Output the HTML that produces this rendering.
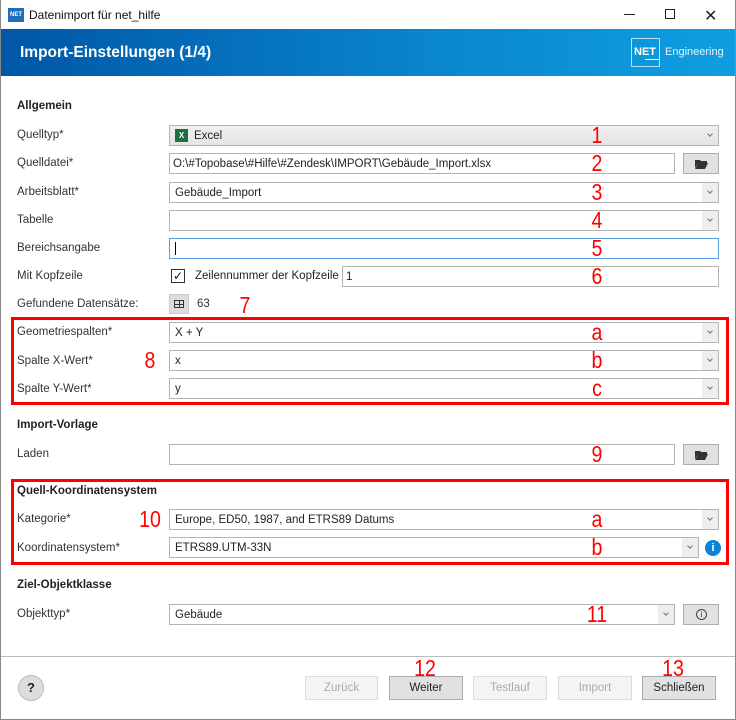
<!DOCTYPE html>
<html><head><meta charset="utf-8"><style>
*{box-sizing:border-box;margin:0;padding:0}
body{width:736px;height:720px;overflow:hidden;background:#fff;font-family:"Liberation Sans",sans-serif;font-size:12px;color:#333;position:relative}
.a{position:absolute}
.win{left:0;top:0;width:736px;height:720px;border:1px solid #888;border-top:none}
.lbl{position:absolute;left:17px;font-size:11.5px;color:#333;line-height:14px}
.h{position:absolute;left:17px;font-weight:bold;font-size:11.5px;color:#222;line-height:14px}
.f{position:absolute;height:21px;border:1px solid #b4b4b4;background:#fff;font-size:11.5px;line-height:20px;padding-left:5px;color:#222}
.cb::after{content:"";position:absolute;right:0;top:0;width:16px;height:19px;background:#eeeeee}
.cb::before{content:"";position:absolute;right:6px;top:6px;width:3px;height:3px;border-right:1px solid #777;border-bottom:1px solid #777;transform:rotate(45deg);z-index:2}
.nb::after{display:none}
.btn{position:absolute;height:21px;border:1px solid #adadad;background:#e1e1e1}
.n{position:absolute;color:#f00;font-size:23px;line-height:22px;transform:translateX(-50%) scaleX(.85)}
.rb{position:absolute;border:3px solid #f00}
.fb{position:absolute;top:676px;height:24px;border:1px solid #adadad;background:#e1e1e1;font-size:11.5px;text-align:center;line-height:22px;color:#222}
.dis{background:#f4f4f4;border-color:#ddd;color:#aaa}
</style></head><body>
<div class="a win"></div>
<div class="a" style="left:8px;top:8px;width:16px;height:14px;background:#1c6fb8;color:#fff;font-size:6px;font-weight:bold;line-height:14px;text-align:center">NET</div>
<div class="a" style="left:29px;top:8px;font-size:12px;color:#111">Datenimport für net_hilfe</div>
<div class="a" style="left:624px;top:14px;width:11px;height:1px;background:#222"></div>
<div class="a" style="left:665px;top:9px;width:10px;height:10px;border:1px solid #222"></div>
<div class="a" style="left:704px;top:6px;font-size:16px;color:#222">✕</div>
<div class="a" style="left:1px;top:29px;width:734px;height:47px;background:linear-gradient(90deg,#0057a6,#0a86cf 60%,#109ee0)"></div>
<div class="a" style="left:20px;top:44px;color:#fff;font-weight:bold;font-size:15.5px">Import-Einstellungen (1/4)</div>
<div class="a" style="left:631px;top:38px;width:29px;height:29px;border:1px solid rgba(255,255,255,.7)"></div>
<div class="a" style="left:634px;top:46px;color:#fff;font-weight:bold;font-size:11px">NET</div>
<div class="a" style="left:645px;top:59px;width:14px;height:1px;background:#fff"></div>
<div class="a" style="left:665px;top:46px;color:#e8f4fc;font-size:11px">Engineering</div>

<div class="h" style="top:99px">Allgemein</div>
<div class="lbl" style="top:128px">Quelltyp*</div>
<div class="f cb nb" style="left:169px;top:125px;width:550px;background:linear-gradient(#f0f0f0,#e4e4e4);padding-left:24px">Excel</div>
<div class="a" style="left:175px;top:129px;width:13px;height:13px;background:#1d7044;color:#fff;font-size:8px;font-weight:bold;line-height:13px;text-align:center">X</div>
<div class="lbl" style="top:156px">Quelldatei*</div>
<div class="f" style="left:169px;top:153px;width:506px;padding-left:3px">O:\#Topobase\#Hilfe\#Zendesk\IMPORT\Gebäude_Import.xlsx</div>
<div class="btn" style="left:683px;top:153px;width:36px"><svg class="a" style="left:11px;top:5px" width="13" height="10"><path d="M0 1h5l1 1h6v2H3L0 9z M3 4h10l-3 6H0z" fill="#333"/></svg></div>
<div class="lbl" style="top:185px">Arbeitsblatt*</div>
<div class="f cb" style="left:169px;top:182px;width:550px">Gebäude_Import</div>
<div class="lbl" style="top:213px">Tabelle</div>
<div class="f cb" style="left:169px;top:210px;width:550px"></div>
<div class="lbl" style="top:241px">Bereichsangabe</div>
<div class="f" style="left:169px;top:238px;width:550px;border-color:#5a9ee6"></div>
<div class="a" style="left:175px;top:242px;width:1px;height:13px;background:#000"></div>
<div class="lbl" style="top:269px">Mit Kopfzeile</div>
<div class="a" style="left:171px;top:269px;width:14px;height:14px;border:1px solid #333;font-size:12px;line-height:12px;text-align:center;color:#111">✓</div>
<div class="a" style="left:195px;top:270px;font-size:11.5px;color:#222">Zeilennummer der Kopfzeile</div>
<div class="f" style="left:342px;top:266px;width:377px;padding-left:3px">1</div>
<div class="lbl" style="top:297px">Gefundene Datensätze:</div>
<div class="a" style="left:169px;top:294px;width:20px;height:20px;background:#ddd;border:1px solid #ccc"></div>
<div class="a" style="left:174px;top:300px;width:10px;height:8px;border:1px solid #333;background:linear-gradient(#333,#333) 50% 0/1px 100% no-repeat,linear-gradient(#333,#333) 0 50%/100% 1px no-repeat"></div>
<div class="a" style="left:197px;top:298px;font-size:11.5px">63</div>

<div class="lbl" style="top:325px">Geometriespalten*</div>
<div class="f cb" style="left:169px;top:322px;width:550px">X + Y</div>
<div class="lbl" style="top:354px">Spalte X-Wert*</div>
<div class="f cb" style="left:169px;top:350px;width:550px">x</div>
<div class="lbl" style="top:382px">Spalte Y-Wert*</div>
<div class="f cb" style="left:169px;top:378px;width:550px">y</div>
<div class="rb" style="left:11px;top:317px;width:718px;height:88px"></div>

<div class="h" style="top:418px">Import-Vorlage</div>
<div class="lbl" style="top:447px">Laden</div>
<div class="f" style="left:169px;top:444px;width:506px"></div>
<div class="btn" style="left:683px;top:444px;width:36px"><svg class="a" style="left:11px;top:5px" width="13" height="10"><path d="M0 1h5l1 1h6v2H3L0 9z M3 4h10l-3 6H0z" fill="#333"/></svg></div>

<div class="h" style="top:484px">Quell-Koordinatensystem</div>
<div class="lbl" style="top:512px">Kategorie*</div>
<div class="f cb" style="left:169px;top:509px;width:550px">Europe, ED50, 1987, and ETRS89 Datums</div>
<div class="lbl" style="top:541px">Koordinatensystem*</div>
<div class="f cb" style="left:169px;top:537px;width:530px">ETRS89.UTM-33N</div>
<div class="a" style="left:705px;top:540px;width:16px;height:16px;border-radius:50%;background:#0a84d6;color:#fff;font-weight:bold;font-size:11px;text-align:center;line-height:16px">i</div>
<div class="rb" style="left:11px;top:479px;width:718px;height:86px"></div>

<div class="h" style="top:578px">Ziel-Objektklasse</div>
<div class="lbl" style="top:607px">Objekttyp*</div>
<div class="f cb" style="left:169px;top:604px;width:506px">Gebäude</div>
<div class="btn" style="left:683px;top:604px;width:36px"><div class="a" style="left:12px;top:4px;width:11px;height:11px;border:1px solid #444;border-radius:50%;font-size:8px;line-height:9px;text-align:center">i</div></div>

<div class="n" style="left:597px;top:124px">1</div>
<div class="n" style="left:597px;top:152px">2</div>
<div class="n" style="left:597px;top:181px">3</div>
<div class="n" style="left:597px;top:209px">4</div>
<div class="n" style="left:597px;top:237px">5</div>
<div class="n" style="left:597px;top:265px">6</div>
<div class="n" style="left:245px;top:294px">7</div>
<div class="n" style="left:150px;top:349px">8</div>
<div class="n" style="left:597px;top:321px">a</div>
<div class="n" style="left:597px;top:349px">b</div>
<div class="n" style="left:597px;top:377px">c</div>
<div class="n" style="left:597px;top:443px">9</div>
<div class="n" style="left:150px;top:508px">10</div>
<div class="n" style="left:597px;top:508px">a</div>
<div class="n" style="left:597px;top:536px">b</div>
<div class="n" style="left:597px;top:603px">11</div>

<div class="a" style="left:1px;top:656px;width:734px;height:1px;background:#bbb"></div>
<div class="a" style="left:18px;top:675px;width:26px;height:26px;border-radius:50%;background:#ddd;border:1px solid #bbb;text-align:center;line-height:24px;font-size:13px;font-weight:bold;color:#222">?</div>
<div class="n" style="left:425px;top:657px">12</div>
<div class="n" style="left:673px;top:657px">13</div>
<div class="fb dis" style="left:305px;width:73px">Zurück</div>
<div class="fb" style="left:389px;width:74px">Weiter</div>
<div class="fb dis" style="left:473px;width:74px">Testlauf</div>
<div class="fb dis" style="left:558px;width:74px">Import</div>
<div class="fb" style="left:642px;width:74px">Schließen</div>
</body></html>
